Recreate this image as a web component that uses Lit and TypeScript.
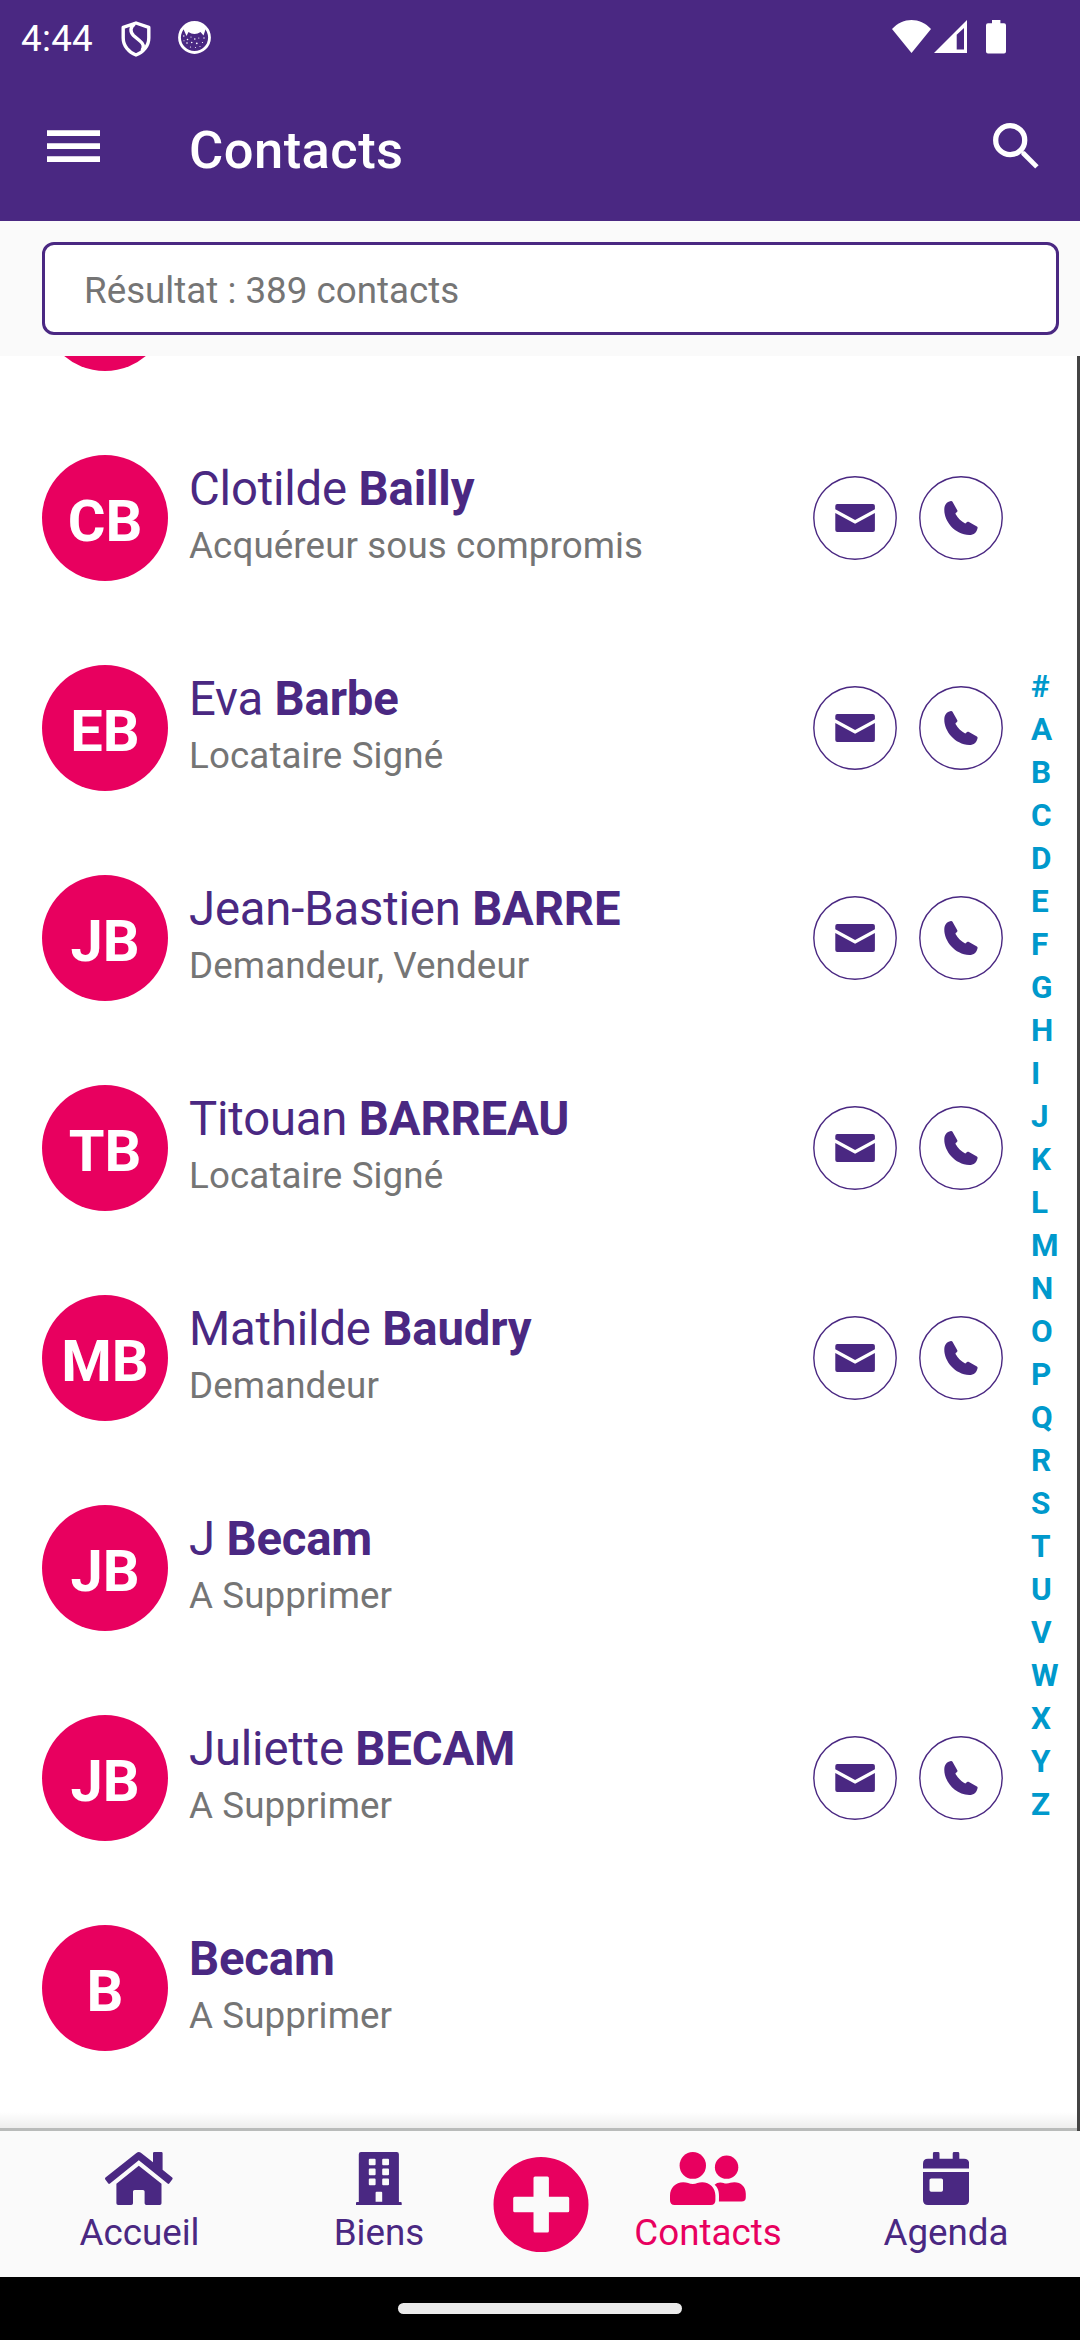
import { LitElement, html, css, svg, nothing } from "lit";
import { customElement, property } from "lit/decorators.js";

interface Contact {
  initials: string;
  first: string;
  last: string;
  status: string;
  reachable: boolean;
}

const CONTACTS: Contact[] = [
  { initials: "CB", first: "Clotilde", last: "Bailly", status: "Acquéreur sous compromis", reachable: true },
  { initials: "EB", first: "Eva", last: "Barbe", status: "Locataire Signé", reachable: true },
  { initials: "JB", first: "Jean-Bastien", last: "BARRE", status: "Demandeur, Vendeur", reachable: true },
  { initials: "TB", first: "Titouan", last: "BARREAU", status: "Locataire Signé", reachable: true },
  { initials: "MB", first: "Mathilde", last: "Baudry", status: "Demandeur", reachable: true },
  { initials: "JB", first: "J", last: "Becam", status: "A Supprimer", reachable: false },
  { initials: "JB", first: "Juliette", last: "BECAM", status: "A Supprimer", reachable: true },
  { initials: "B", first: "", last: "Becam", status: "A Supprimer", reachable: false },
];

const LETTERS = "#ABCDEFGHIJKLMNOPQRSTUVWXYZ".split("");

const icon = (w: number, h: number, body: unknown) => html`
  <svg width=${w} height=${h} viewBox="0 0 ${w} ${h}" fill="currentColor" aria-hidden="true">${body}</svg>
`;

const shieldIcon = icon(30, 36, svg`
  <path fill="none" stroke="currentColor" stroke-width="3.4" stroke-linejoin="round"
    d="M15 2 L27.8 6.4 V17 C27.8 25 22 31.5 15 34 C8 31.5 2.2 25 2.2 17 V6.4 Z"/>
  <path fill="none" stroke="currentColor" stroke-width="3.4"
    d="M13.5 3 C9 6 9 11 12.5 14.5 L19 20 C23 23 23.4 26 21 29.5"/>`);

const badgeIcon = icon(33, 33, svg`
  <circle cx="16.5" cy="16.5" r="15" fill="none" stroke="currentColor" stroke-width="2.8"/>
  <path d="M5 7 C10 0 23 0 28 7 L25.5 14.5 L22.5 11 C19 13.6 14 13.6 10.5 11 L8.5 15 Z"/>
  <g>
    <circle cx="5.8" cy="15" r=".7"/><circle cx="9.5" cy="18.5" r=".8"/><circle cx="13" cy="16" r=".6"/>
    <circle cx="16.8" cy="18" r=".8"/><circle cx="20.8" cy="17" r=".6"/><circle cx="26" cy="17" r=".7"/>
    <circle cx="9" cy="22" r=".8"/><circle cx="13.7" cy="21.5" r=".8"/><circle cx="18.8" cy="22.3" r=".9"/>
    <circle cx="24.5" cy="21.5" r=".6"/><circle cx="12.5" cy="26" r=".6"/><circle cx="17.5" cy="26.5" r=".5"/>
    <circle cx="22" cy="25.5" r=".5"/><circle cx="6" cy="19.8" r=".5"/>
  </g>`);

const wifiIcon = icon(39, 33, svg`<path d="M0 9 C11 -3 28 -3 39 9 L19.5 33 Z"/>`);

const signalIcon = icon(33, 33, svg`
  <path fill-rule="evenodd" d="M33 0 V33 H0 Z M30 8 L22.7 14.8 V29.4 H30 Z"/>`);

const batteryIcon = icon(20, 34, svg`
  <path d="M6 0 H14.4 V3.2 H18 Q20 3.2 20 5.2 V31.6 Q20 33.6 18 33.6 H2 Q0 33.6 0 31.6 V5.2 Q0 3.2 2 3.2 H6 Z"/>`);

const menuIcon = icon(53, 32, svg`
  <path d="M0 .3 H53 V6 H0 Z M0 13.2 H53 V19 H0 Z M0 26.2 H53 V32 H0 Z"/>`);

const searchIcon = icon(46, 46, svg`
  <circle cx="17.2" cy="17.2" r="14.5" fill="none" stroke="currentColor" stroke-width="5.3"/>
  <path d="M28.3 31.8 V29.4 L29.4 28.3 H31.8 L45.6 42.2 L42.2 45.6 Z"/>`);

const ring = svg`<circle cx="42" cy="42" r="41.2" fill="none" stroke="currentColor" stroke-width="1.4"/>`;

const mailIcon = icon(84, 84, svg`${ring}
  <path transform="translate(22.3 28)" d="M2 0 H37.6 Q39.6 0 39.6 2 V5.2 L19.8 16 L0 5.2 V2 Q0 0 2 0 Z
    M0 9 L19.8 19.8 L39.6 9 V26 Q39.6 28 37.6 28 H2 Q0 28 0 26 Z"/>`);

const phoneIcon = icon(84, 84, svg`${ring}
  <path transform="translate(25.3 25)" d="M6.6 .1 Q7.6 -.1 8.2 .8 L13 9.3 Q13.5 10.2 12.7 10.9 L11.4 11.9 Q11 12.5 11.4 13.2
    C13.5 16.8 16.9 20.3 20.5 22.3 Q21.2 22.6 21.7 22.1 L22.7 21 Q23.3 20.4 24.2 20.8
    L32.6 25.5 Q33.5 26 33.3 27 C32.4 31.4 29.6 34 25 34 C10.5 33.6 -.2 20 0 8.6 C.1 4 2.4 1 6.6 .1 Z"/>`);

const homeIcon = icon(68, 53, svg`
  <path d="M31.4 .9 Q33.8 -.9 36.2 .9 L48 10.2 V1.2 Q48 0 49.2 0 H56.4 Q57.6 0 57.6 1.2 V17.8
    L67.2 25.6 Q68 26.4 67.4 27.3 L64.2 31.4 Q63.5 32.3 62.6 31.5 L33.8 8.2 L5 31.5
    Q4 32.3 3.3 31.4 L.3 27.4 Q-.4 26.4 .5 25.6 Z"/>
  <path d="M33.8 13.7 L56.5 31.8 V51.2 Q56.5 53 54.7 53 H41.4 Q39.6 53 39.6 51.2 V39.6
    Q39.6 38 38 38 H29.6 Q28 38 28 39.6 V51.2 Q28 53 26.2 53 H13.2 Q11.4 53 11.4 51.2 V31.8 Z"/>`);

const buildingIcon = icon(46, 53, svg`
  <path fill-rule="evenodd" d="M5 0 H40.7 Q42.9 0 42.9 2.2 V50 H44.8 Q45.7 50 45.7 51 V53 H0 V51 Q0 50 .9 50
    H2.8 V2.2 Q2.8 0 5 0 Z
    M13.8 6.7 H18.6 Q19.6 6.7 19.6 7.7 V12.3 Q19.6 13.3 18.6 13.3 H13.8 Q12.8 13.3 12.8 12.3 V7.7 Q12.8 6.7 13.8 6.7 Z
    M27.2 6.7 H32 Q33 6.7 33 7.7 V12.3 Q33 13.3 32 13.3 H27.2 Q26.2 13.3 26.2 12.3 V7.7 Q26.2 6.7 27.2 6.7 Z
    M13.8 16.6 H18.6 Q19.6 16.6 19.6 17.6 V22.3 Q19.6 23.3 18.6 23.3 H13.8 Q12.8 23.3 12.8 22.3 V17.6 Q12.8 16.6 13.8 16.6 Z
    M27.2 16.6 H32 Q33 16.6 33 17.6 V22.3 Q33 23.3 32 23.3 H27.2 Q26.2 23.3 26.2 22.3 V17.6 Q26.2 16.6 27.2 16.6 Z
    M13.8 26.5 H18.6 Q19.6 26.5 19.6 27.5 V32.3 Q19.6 33.3 18.6 33.3 H13.8 Q12.8 33.3 12.8 32.3 V27.5 Q12.8 26.5 13.8 26.5 Z
    M27.2 26.5 H32 Q33 26.5 33 27.5 V32.3 Q33 33.3 32 33.3 H27.2 Q26.2 33.3 26.2 32.3 V27.5 Q26.2 26.5 27.2 26.5 Z
    M20.6 39.8 H25.2 Q26.2 39.8 26.2 40.8 V49.8 H19.6 V40.8 Q19.6 39.8 20.6 39.8 Z"/>`);

const peopleIcon = icon(76, 53, svg`
  <ellipse cx="22.8" cy="13.4" rx="13.2" ry="13.4"/>
  <ellipse cx="56.6" cy="15.2" rx="11.7" ry="11.6"/>
  <path d="M0 43.6 C0 35.8 5.6 30.3 13.2 30.3 C17 30.3 19.4 32 22.8 32 C26.2 32 28.6 30.3 32.2 30.3
    C39.8 30.3 45.4 35.8 45.4 43.6 V48.2 Q45.4 53 40.8 53 H4.6 Q0 53 0 48.2 Z"/>
  <path d="M44.6 32.8 Q47 30.3 50.4 30.4 C53 30.5 54 31.5 56.6 31.5 C59.4 31.5 61 30.3 64.4 30.3
    C71 30.3 75.8 35 75.8 41.8 V45.2 Q75.8 49.5 71.6 49.5 H48.9 C49.3 42.5 49.2 36.5 44.6 32.8 Z"/>`);

const calendarIcon = icon(46, 53, svg`
  <path d="M0 16.5 V11.7 Q0 6.7 5 6.7 H9.9 V1.4 Q9.9 0 11.3 0 H15.1 Q16.5 0 16.5 1.4 V6.7 H29.7 V1.4
    Q29.7 0 31.1 0 H34.9 Q36.3 0 36.3 1.4 V6.7 H41.2 Q46.1 6.7 46.1 11.7 V16.5 Z"/>
  <path fill-rule="evenodd" d="M0 20 H46.1 V48 Q46.1 53 41.2 53 H5 Q0 53 0 48 Z
    M8.2 26.4 H18.3 Q20 26.4 20 28.1 V38.1 Q20 39.8 18.3 39.8 H8.2 Q6.5 39.8 6.5 38.1 V28.1 Q6.5 26.4 8.2 26.4 Z"/>`);

const addIcon = icon(96, 96, svg`
  <path fill-rule="evenodd" d="M48 0 A47.5 47.5 0 1 1 48 95 A47.5 47.5 0 1 1 48 0 Z
    M42 19.5 Q40.5 19.5 40.5 21 V39.8 H21.7 Q20.2 39.8 20.2 41.3 V53.7 Q20.2 55.2 21.7 55.2 H40.5 V74
    Q40.5 75.5 42 75.5 H54.4 Q55.9 75.5 55.9 74 V55.2 H74.7 Q76.2 55.2 76.2 53.7 V41.3 Q76.2 39.8 74.7 39.8
    H55.9 V21 Q55.9 19.5 54.4 19.5 Z"/>`);

@customElement("contact-row")
export class ContactRow extends LitElement {
  @property({ attribute: false }) contact?: Contact;

  static styles = css`
    :host { display: flex; align-items: center; height: 210px; flex: none; padding: 0 77px 0 42px; box-sizing: border-box; }
    .avatar {
      width: 126px; height: 126px; flex: none; border-radius: 50%; background: #e8005f; color: #fff;
      display: flex; align-items: center; justify-content: center;
      font-size: 57.75px; font-weight: 700; line-height: 68px; padding-top: 5px; box-sizing: border-box;
    }
    .text { flex: 1; align-self: flex-start; padding: 48px 0 0 21px; white-space: nowrap; }
    .name { font-size: 47.25px; line-height: 56px; color: #4a2882; letter-spacing: -0.17px; }
    .status { font-size: 36.75px; line-height: 44px; color: #757575; margin-top: 7px; letter-spacing: 0.1px; }
    .last { font-weight: 700; }
    .actions { display: flex; gap: 22px; color: #4a2882; }
    svg { display: block; }
  `;

  render() {
    const c = this.contact;
    if (!c) return html`<div class="avatar"></div>`;
    return html`
      <div class="avatar">${c.initials}</div>
      <div class="text">
        <div class="name">${c.first ? `${c.first} ` : nothing}<span class="last">${c.last}</span></div>
        <div class="status">${c.status}</div>
      </div>
      ${c.reachable ? html`<div class="actions">${mailIcon}${phoneIcon}</div>` : nothing}
    `;
  }
}

@customElement("app-root")
export class AppRoot extends LitElement {
  static styles = css`
    :host {
      display: flex; flex-direction: column; width: 1080px; height: 2340px; overflow: hidden;
      background: #fff; font-family: Roboto, "Liberation Sans", sans-serif;
    }
    svg { display: block; }
    .top { background: #4a2882; color: #fff; height: 221px; flex: none; }
    .statusbar { display: flex; align-items: flex-start; height: 72px; padding: 0 74px 0 21px; }
    .clock { font-size: 36.75px; line-height: 44px; margin-top: 17px; width: 100px; letter-spacing: 0.3px; }
    .shield { margin: 21px 27px 0 0; }
    .badge { margin-top: 21px; }
    .system { display: flex; margin: 20px 0 0 auto; }
    .signal { margin-left: 3px; }
    .battery { margin-left: 19px; }
    .toolbar { display: flex; align-items: center; height: 149px; padding: 0 41px 0 47px; }
    .menu { margin-top: -2px; }
    .title { flex: 1; margin: 7px 0 0 89px; font-size: 52.5px; line-height: 62px; font-weight: 500; letter-spacing: 0.45px; }
    .search { margin-top: -1px; }
    .filter { background: #fafafa; padding: 21px; padding-left: 42px; height: 135px; box-sizing: border-box; flex: none; }
    .field {
      height: 93px; box-sizing: border-box; border: 3px solid #4a2882; border-radius: 12px; background: #fff;
      padding: 4px 0 0 39px; display: flex; align-items: center; color: #757575; font-size: 36.75px; line-height: 44px;
    }
    .body { flex: 1; min-height: 0; display: flex; position: relative; overflow: hidden; }
    .list { flex: none; width: 1080px; display: flex; flex-direction: column; margin-top: -153px; }
    .index {
      position: absolute; left: 1031px; top: 309px; color: #09c; font-size: 31.5px; font-weight: 700; line-height: 43px;
    }
    .thumb { position: absolute; right: 0; top: 0; bottom: 0; width: 3px; background: #444; }
    .shade {
      position: absolute; left: 0; right: 3px; bottom: 3px; height: 16px;
      background: linear-gradient(rgba(0, 0, 0, 0), rgba(0, 0, 0, 0.07));
    }
    .rule { position: absolute; left: 0; right: 3px; bottom: 0; height: 3px; background: #b9bbba; }
    .nav {
      height: 146px; flex: none; background: #fafafa; color: #4a2882; display: grid;
      grid-template-columns: 279px 200px 123px 212px 264px; justify-items: center;
    }
    .tab { display: flex; flex-direction: column; align-items: center; padding-top: 21px; font-size: 36.75px; line-height: 44px; gap: 6px; }
    .active { color: #e8005f; }
    .add { color: #e8005f; margin-top: 26px; }
    .gesture { height: 63px; flex: none; background: #000; display: flex; justify-content: center; }
    .handle { width: 284px; height: 11px; margin-top: 26px; border-radius: 6px; background: #ebebeb; }
  `;

  render() {
    return html`
      <header class="top">
        <div class="statusbar">
          <div class="clock">4:44</div>
          <div class="shield">${shieldIcon}</div>
          <div class="badge">${badgeIcon}</div>
          <div class="system">
            <div>${wifiIcon}</div>
            <div class="signal">${signalIcon}</div>
            <div class="battery">${batteryIcon}</div>
          </div>
        </div>
        <div class="toolbar">
          <div class="menu">${menuIcon}</div>
          <div class="title">Contacts</div>
          <div class="search">${searchIcon}</div>
        </div>
      </header>
      <section class="filter"><div class="field">Résultat : 389 contacts</div></section>
      <main class="body">
        <div class="list">
          <contact-row></contact-row>
          ${CONTACTS.map((c) => html`<contact-row .contact=${c}></contact-row>`)}
        </div>
        <div class="index">${LETTERS.map((l) => html`<div>${l}</div>`)}</div>
        <div class="shade"></div>
        <div class="rule"></div>
        <div class="thumb"></div>
      </main>
      <nav class="nav">
        <div class="tab">${homeIcon}<span>Accueil</span></div>
        <div class="tab">${buildingIcon}<span>Biens</span></div>
        <div class="add">${addIcon}</div>
        <div class="tab active">${peopleIcon}<span>Contacts</span></div>
        <div class="tab">${calendarIcon}<span>Agenda</span></div>
      </nav>
      <footer class="gesture"><div class="handle"></div></footer>
    `;
  }
}
